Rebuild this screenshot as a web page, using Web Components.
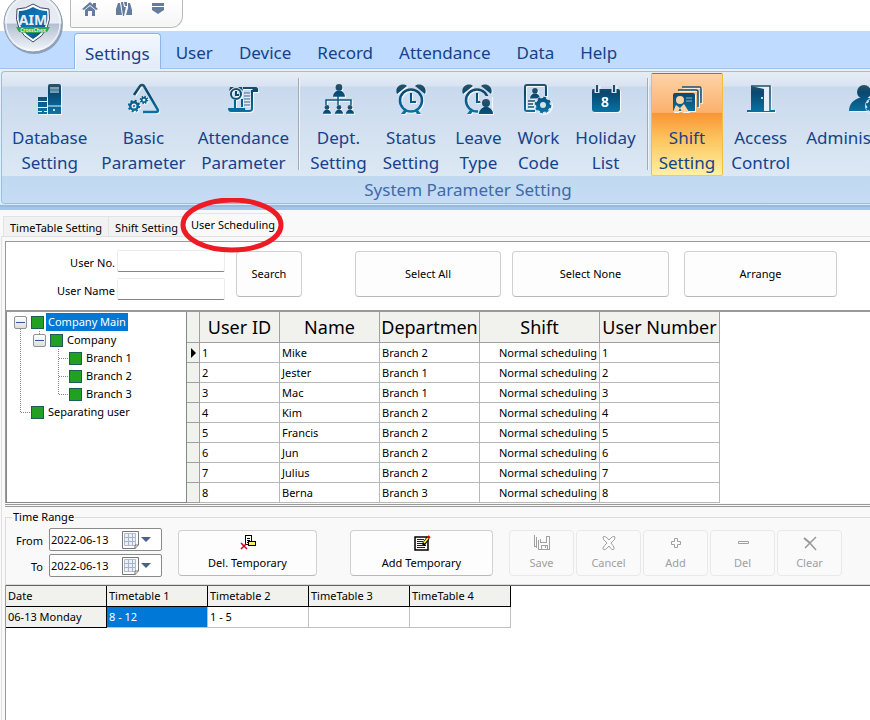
<!DOCTYPE html>
<html lang="en">
<head>
<meta charset="utf-8">
<title>User Scheduling</title>
<style>
html { height: 100%; }
body {
    margin: 0;
    min-height: 100%;
    display: flex;
    flex-direction: column;
    overflow-x: hidden;
    background: #f9f9f9;
    color: #000;
    font: 11px/16px "Noto Sans", "Open Sans", sans-serif;
}
</style>
</head>
<body>
<schedule-app></schedule-app>

<script>
function gear (x, y, r, hole) {
    const step = (2 * Math.PI * r / 16).toFixed(3);
    return `<circle cx="${x}" cy="${y}" r="${r}" fill="none" stroke="url(#g)" stroke-width="2.500" stroke-dasharray="${step}"/>
        <circle cx="${x}" cy="${y}" r="${(r + hole) / 2}" fill="none" stroke="url(#g)" stroke-width="${r - hole}"/>`;
}

function person (x, y, s) {
    return `<g transform="translate(${x} ${y}) scale(${s})"><circle cy="4" r="4"/><path d="M-7 15 C-7 11 -4 9 -2 8 H2 C4 9 7 11 7 15Z"/></g>`;
}

const clock = x => `
    <g fill="none" stroke="url(#g)">
        <circle cx="${x}" cy="17.500" r="11" stroke-width="2.500"/>
        <path d="M${x} 10 V19 H${x + 5}" stroke-width="2"/>
    </g>
    <path d="M${x - 14} 11 C${x - 17} 4 ${x - 9} -1 ${x - 4} 3Z M${x + 14} 11 C${x + 17} 4 ${x + 9} -1 ${x + 4} 3Z M${x - 7} 27 L${x - 10} 31 H${x - 6} L${x - 4} 28Z M${x + 7} 27 L${x + 10} 31 H${x + 6} L${x + 4} 28Z"/>`;

const icons = {
    database: `<path d="M16 1 H25 Q27 1 27 3 V31 H14 V3 Q14 1 16 1Z M4 14 H13 V18 H4Z M4 19 H13 V24 H4Z M4 25 H13 V28 H10 V29 H13 V31 H4 V29 H8 V28 H4Z"/>
        <path d="M16 5 H25 M16 9 H25 M14 23 H27" stroke="#e6f0f8" fill="none"/><path d="M16 7 H25" stroke="#9fb9cc"/><circle cx="20" cy="27" r="1" fill="#fff"/>`,
    basic: `<path d="M6 12 L12 3 Q14 1 16 3 L30 27 Q30 29 28 29 H15" fill="none" stroke="url(#g)" stroke-width="2.500"/>${gear(6, 23, 5, 2.5)}<circle cx="6" cy="23" r="1"/>${gear(16, 17, 3, 1.5)}`,
    attendance: `<g fill="none" stroke="url(#g)" stroke-width="2"><circle cx="9" cy="11" r="5"/><path d="M9 8 V12 H12 M8 17 V26"/><path d="M16 5 H28 Q30 5 30 8 M25 7 V26 Q25 28 22 28 H18 M15 16 V24"/></g>
        <path d="M2 8 L3 4 L7 4Z M11 4 L15 4 L16 8Z M1 25 H18 Q18 28 20 29 H4 Q1 29 1 25Z M25 4 H29 Q32 5 31 9 H26Z"/><path d="M17 10 H23 M17 13 H23 M17 16 H23 M17 19 H23 M17 22 H23" stroke="#456b86"/>`,
    dept: `${person(17, 1, 0.85)}<path d="M16 13 V17 H4 V22 M16 17 H29 V22 M16 17 V22" fill="none" stroke="url(#g)" stroke-width="1.500"/>
        ${person(5, 22, 0.58)}${person(17, 22, 0.58)}${person(28, 22, 0.58)}`,
    status: clock(16),
    leave: `${clock(15)}<path d="M16 31 V25 L19 22 L18 18 L22 13 H30 V31Z" fill="#cfdeee"/>${person(24, 16, 1)}`,
    work: `<path d="M13 28 H5 Q3 28 3 26 V4 Q3 2 5 2 H22 Q24 2 24 4 V13" fill="none" stroke="url(#g)" stroke-width="2"/>${person(13, 5, 0.7)}
        <path d="M6 18 H13 M6 21 H11 M6 24 H12" stroke="#26526e" stroke-width="1.500"/><circle cx="21" cy="22" r="9" fill="#d3e0ef"/>${gear(21, 22, 7, 3)}`,
    holiday: `<path d="M3 6 H28 Q30 6 30 8 V26 Q30 29 27 29 H5 Q2 29 2 26 V8 Q2 6 3 6Z"/>
        <path d="M7 2 V10 M24 2 V10" stroke="#d7e2f0" stroke-width="5"/><path d="M7 2 V9 M24 2 V9" stroke="url(#g)" stroke-width="2"/>
        <path d="M6.500 2 H7.500 V9 H6.500Z M23.500 2 H24.500 V9 H23.500Z"/>
        <text x="15" y="24" text-anchor="middle" fill="#fff" font-size="14" font-weight="700">8</text>`,
    shift: `<path d="M11 4 H29 Q30 4 30 6 V20 M7 7 H25 Q27 7 27 9 V24" fill="none" stroke="url(#g)" stroke-width="1.500"/>
        <path d="M4 10 H22 Q24 10 24 12 V28 H2 V12 Q2 10 4 10Z"/><path d="M15 15 H21 M15 18 H21" stroke="#8fb5cb"/>
        <g fill="#ffd3a2"><circle cx="9" cy="17" r="4"/><path d="M2 29 L5 22 L9 25 L13 21 L18 29 H11 L9 25 L7 29Z"/></g>`,
    access: `<path d="M2 27 H30 V29 H2Z"/><path d="M6 3 H25 V28 H6Z" fill="#e6eef7"/><path d="M6 3 H25 V28" fill="none" stroke="url(#g)" stroke-width="1.500"/><path d="M6 3 L19 6 V29 H6Z"/><circle cx="17" cy="15" r="1" fill="#fff"/>`,
    admin: `<circle cx="19" cy="9" r="7"/><path d="M4 28 C4 20 9 17 14 15 H24 L32 19 V28Z"/><circle cx="28" cy="23" r="8" fill="#d3e0ef"/>${gear(28, 23, 6, 2)}`
};

const glyphs = {
    deltemp: `<g shape-rendering="crispEdges"><path d="M6 1 H11 V9 H6Z" fill="#fff"/><path d="M5.500 .5 H11.500 V9.500 H5.500Z M7 3.500 H10 M7 5.500 H10 M7 7.500 H9" fill="none" stroke="#000"/><path d="M8.500 6.500 H15.500 V10.500 H8.500Z" fill="#ffef5c" stroke="#000"/></g><path d="M1 8 L7 14 M6 9 L1 14" stroke="#d00028" stroke-width="1.500"/>`,
    addtemp: `<path d="M1 2 H14 V15 H1Z" fill="#fff" stroke="#000" stroke-width="1.500"/><path d="M3 4.500 H10 M3 6.500 H9 M3 8.500 H8 M3 10.500 H12 M3 12.500 H11" stroke="#10108c"/><path d="M9 10 L14 3" stroke="#000" stroke-width="3.500"/><path d="M10 8 L14 3" stroke="#ffee30" stroke-width="2"/><path d="M14 1 L16 3" stroke="#e00000" stroke-width="2"/>`,
    save: `<g stroke="#a0a0a0" fill="none" shape-rendering="crispEdges"><path d="M.5 0 V11 L3 13 M2.500 2 V12"/><path d="M4.500 5 V14.500 H15.500 V1.500 H12.500 V7.500 H6.500 V4 M7.500 14 V10.500 H13.500 V14 M11.500 11 V13"/></g>`,
    cancel: `<path d="M2 2 Q4 0 8 5 Q12 0 14 2 Q15 4 10 8 Q14 13 13 14 Q11 16 8 11 Q4 16 2 14 Q1 13 6 8 Q1 4 2 2Z" fill="#fcfcfc" stroke="#a0a0a0"/>`,
    add: `<path d="M6.500 3.500 H9.500 V6.500 H12.500 V9.500 H9.500 V12.500 H6.500 V9.500 H3.500 V6.500 H6.500Z" fill="none" stroke="#a0a0a0"/>`,
    del: `<path d="M3.500 6.500 H13.500 V8.500 H3.500Z" fill="none" stroke="#a0a0a0"/>`,
    clear: `<path d="M2 3 L8 8" stroke="#999" stroke-width="2"/><path d="M7 7 L14 15 M14 2 L3 13" stroke="#999" stroke-width="1.500"/>`
};

class RibbonIcon extends HTMLElement {
    constructor () {
        super();
        this.attachShadow({mode: "open"});
    }

    connectedCallback () {
        this.shadowRoot.innerHTML = `
        <style>
            :host { display: block; width: 32px; height: 32px; white-space: normal; }
            svg { display: block; filter: drop-shadow(1px 1px 0 #f4f9fd); }
        </style>
        <svg width="32" height="32" viewBox="0 0 32 32" fill="url(#g)" aria-hidden="true">
            <defs><linearGradient id="g" gradientUnits="userSpaceOnUse" x1="0" y1="0" x2="0" y2="32">
                <stop offset="0" stop-color="#2f5468"/><stop offset="0.300" stop-color="#08486f"/><stop offset="1" stop-color="#0878ac"/>
            </linearGradient></defs>
            ${icons[this.getAttribute("name")]}
        </svg>`;
    }
}

class RibbonItem extends HTMLElement {
    constructor () {
        super();
        this.attachShadow({mode: "open"});
    }

    connectedCallback () {
        this.shadowRoot.innerHTML = `
        <style>
            :host { display: block; flex: none; }
            button {
                box-sizing: border-box; height: 103px; padding: 9px 7px 0; border: 1px solid transparent; border-radius: 2px;
                background: none; color: #15428b; font: inherit; line-height: 25px; text-align: center;
                display: flex; flex-direction: column; align-items: center; gap: 10px; white-space: pre-line;
            }
            :host([tight]) button { padding: 9px 5px 0; }
            :host([active]) button {
                border-color: #8b7654 #f0bd3c #ffcc33;
                background: linear-gradient(#fdd3a7 0, #fbb16d 38%, #f99535 39%, #fdc55f 65%, #fff1a3 100%);
            }
        </style>
        <button type="button"><ribbon-icon name="${this.getAttribute("icon")}"></ribbon-icon><slot></slot></button>`;
    }
}

class AppHeader extends HTMLElement {
    constructor () {
        super();
        this.attachShadow({mode: "open"});
    }

    connectedCallback () {
        this.shadowRoot.innerHTML = `
        <style>
            :host { display: block; position: relative; background: #fff; font-size: 17px; color: #15428b; }
            .quick {
                box-sizing: border-box; width: 113px; height: 28px; margin-left: 70px; padding: 1px 11px 0; margin-bottom: 3px;
                display: flex; gap: 18px; border: 1px solid #b9b9b9; border-top: 0; border-radius: 0 0 12px 2px;
                background: linear-gradient(#fff, #f5f5f5);
            }
            .quick button { width: 16px; height: 16px; padding: 0; border: 0; background: none; }
            .quick svg { display: block; }
            nav { display: flex; height: 38px; padding: 2px 0 0 74px; box-sizing: border-box; background: #bfdbff; border-bottom: 1px solid #9fc3ee; }
            nav button { border: 1px solid transparent; border-bottom: 0; background: none; padding: 4px 12px 0; color: inherit; font: inherit; line-height: 24px; flex: none; }
            nav button.on { padding: 4px 10px 0; margin-right: 2px; border-color: #8db5e8; border-radius: 4px 4px 0 0; background: linear-gradient(#f2f8ff, #e1ebf7); margin-bottom: -1px; box-shadow: inset 1px 1px #fff; }
            .orb { position: absolute; left: 3px; top: -7px; }
        </style>
        <div class="quick">
            <button type="button" aria-label="Home"><svg width="16" height="16" fill="#647c9f"><path d="M0 8 L8 1 L16 8 L14 9 L8 4 L2 9Z M3 9 L8 5 L13 9 V15 H10 V10 H6 V15 H3Z M11 2 H14 V6 L11 4Z"/></svg></button>
            <button type="button" aria-label="Tools"><svg width="16" height="16" fill="#647c9f"><path d="M2 2 H4 L6 14 H0 V8Z M5 1 H7 L8 6 L10 6 L8 15 H7Z M8 1 H11 V5 H9Z M12 2 H14 L16 9 V14 H10 L12 7Z"/></svg></button>
            <button type="button" aria-label="Customize"><svg width="16" height="16" fill="#647c9f"><path d="M2 2 H14 V5 H2Z M2 6 H14 V9 L8 13 L2 9Z"/></svg></button>
        </div>
        <nav>
            <button type="button" class="on">Settings</button><button type="button">User</button><button type="button">Device</button><button type="button">Record</button><button type="button">Attendance</button><button type="button">Data</button><button type="button">Help</button>
        </nav>
        <svg class="orb" width="62" height="62" viewBox="0 0 62 62" role="img" aria-label="AIM CrossChex">
            <defs>
                <linearGradient id="ball" x2="0" y2="1"><stop offset="0" stop-color="#e3e7ed"/><stop offset="0.500" stop-color="#e8edf4"/><stop offset="0.520" stop-color="#b3bfd1"/><stop offset="1" stop-color="#f4f8fd"/></linearGradient>
                <linearGradient id="shield" x2="1" y2="1"><stop offset="0" stop-color="#0a5ba2"/><stop offset="0.500" stop-color="#0b76bc"/><stop offset="1" stop-color="#07406f"/></linearGradient>
            </defs>
            <circle cx="31" cy="32" r="29" fill="#7888a0" opacity="0.700"/>
            <circle cx="30" cy="30" r="29" fill="url(#ball)" stroke="#8b9ab0"/>
            <circle cx="30" cy="30" r="27" fill="none" stroke="#f7fafd" stroke-width="1"/>
            <path d="M30 11 Q37 16 46 16 Q50 38 30 49 Q10 38 14 16 Q23 16 30 11Z" fill="#fff" stroke="#446"/>
            <path d="M30 14 Q37 18 44 18 Q47 36 30 46 Q13 36 16 18 Q23 18 30 14Z" fill="url(#shield)"/>
            <text x="30" y="32" text-anchor="middle" font-size="14" font-weight="700" fill="#ececee">AIM</text>
            <path d="M13 34 H47 L44 39 Q30 41 16 39Z" fill="#32a548"/>
            <text x="30" y="39" text-anchor="middle" font-size="5" font-weight="700" fill="#e2f3e5">CrossChex</text>
        </svg>`;
    }
}

class RibbonBar extends HTMLElement {
    constructor () {
        super();
        this.attachShadow({mode: "open"});
    }

    connectedCallback () {
        this.shadowRoot.innerHTML = `
        <style>
            :host { display: block; padding: 2px 0 6px 1px; background: linear-gradient(#e5f0fb 0, #d9f0ff 96%, #8eabd1 97%, #a7c4ea 98%); font-size: 17px; overflow: hidden; }
            .group { border: 1px solid #9cbfdb; border-right: 0; border-radius: 4px 0 0 4px; overflow: hidden; background: linear-gradient(#e6edf6 0, #d9e3f1 14px, #c9d9ed 15px, #dce8f4 104px); }
            .items { display: flex; height: 104px; padding: 1px 0 0 2px; box-sizing: border-box; }
            hr { flex: none; width: 1px; height: 92px; margin: 5px 3px 0; border: 0; background: #a4a9b2; box-shadow: 1px 0 #eef4fa; }
            .caption { height: 27px; padding-left: 64px; text-align: center; line-height: 28px; color: #3e6aaa; background: linear-gradient(#c1d8f1, #c5dcf4); }
        </style>
        <div class="group">
            <div class="items">
                <ribbon-item icon="database">Database\nSetting</ribbon-item>
                <ribbon-item icon="basic" tight>Basic\nParameter</ribbon-item>
                <ribbon-item icon="attendance" tight>Attendance\nParameter</ribbon-item>
                <hr>
                <ribbon-item icon="dept">Dept.\nSetting</ribbon-item>
                <ribbon-item icon="status">Status\nSetting</ribbon-item>
                <ribbon-item icon="leave">Leave\nType</ribbon-item>
                <ribbon-item icon="work">Work\nCode</ribbon-item>
                <ribbon-item icon="holiday">Holiday\nList</ribbon-item>
                <hr>
                <ribbon-item icon="shift" active>Shift\nSetting</ribbon-item>
                <ribbon-item icon="access">Access\nControl</ribbon-item>
                <ribbon-item icon="admin">Administrator</ribbon-item>
            </div>
            <div class="caption">System Parameter Setting</div>
        </div>`;
    }
}

class PageTabs extends HTMLElement {
    constructor () {
        super();
        this.attachShadow({mode: "open"});
    }

    connectedCallback () {
        this.shadowRoot.innerHTML = `
        <style>
            :host { display: flex; align-items: flex-end; height: 26px; padding-left: 3px; }
            button { box-sizing: border-box; flex: none; height: 20px; padding: 2px 6px 0; border: 1px solid #e3e3e3; border-bottom: 0; background: #f2f2f2; color: inherit; font: inherit; }
            button + button { border-left: 0; }
            button.on { height: 23px; padding: 0 6px; background: #f9f9f9; position: relative; }
            svg { position: absolute; left: -10px; top: -16px; pointer-events: none; z-index: 2; }
        </style>
        <button type="button">TimeTable Setting</button><button type="button">Shift Setting</button><button type="button" class="on">User Scheduling<svg width="110" height="60" aria-hidden="true"><ellipse cx="57" cy="27" rx="49" ry="25" fill="none" stroke="#ed1c24" stroke-width="5"/></svg></button>`;
    }
}

class ToolButton extends HTMLElement {
    constructor () {
        super();
        this.attachShadow({mode: "open"});
    }

    connectedCallback () {
        const glyph = glyphs[this.getAttribute("icon")];
        this.shadowRoot.innerHTML = `
        <style>
            :host { display: block; flex: none; width: 65px; height: 46px; }
            button {
                width: 100%; height: 100%; padding: 0; border: 1px solid #d0d0d0; border-bottom-color: #b9b9b9; border-radius: 4px;
                background: #fdfdfd; color: #000; font: inherit;
                display: flex; flex-direction: column; align-items: center; justify-content: center; gap: 4px;
            }
            button:disabled { border-color: #e9e9e9; background: #fafafa; color: #a0a0a0; }
            svg { display: block; overflow: visible; }
        </style>
        <button type="button"${this.hasAttribute("disabled") ? " disabled" : ""}>${glyph ? `<svg width="16" height="16" aria-hidden="true">${glyph}</svg>` : ""}<slot></slot></button>`;
    }
}

class SearchPanel extends HTMLElement {
    constructor () {
        super();
        this.attachShadow({mode: "open"});
    }

    connectedCallback () {
        this.shadowRoot.innerHTML = `
        <style>
            :host { display: flex; height: 68px; box-sizing: border-box; padding: 8px 0 0; background: #fff; }
            .fields { display: grid; grid-template-columns: 109px 108px; column-gap: 2px; row-gap: 6px; margin-right: 11px; align-self: start; }
            label { text-align: right; line-height: 22px; padding-top: 2px; height: 20px; }
            input { box-sizing: border-box; width: 108px; height: 22px; border: 1px solid #ececec; border-bottom-color: #858585; border-radius: 2px; font: inherit; }
            tool-button { width: 66px; margin-top: 1px; }
            .all { width: 146px; margin: 1px 11px 0 53px; }
            .none { width: 157px; margin-right: 15px; }
            .arrange { width: 153px; }
        </style>
        <div class="fields">
            <label for="no">User No.</label><input id="no" type="text">
            <label for="name">User Name</label><input id="name" type="text">
        </div>
        <tool-button>Search</tool-button>
        <tool-button class="all">Select All</tool-button>
        <tool-button class="none">Select None</tool-button>
        <tool-button class="arrange">Arrange</tool-button>`;
    }
}

class DeptTree extends HTMLElement {
    constructor () {
        super();
        this.attachShadow({mode: "open"});
    }

    connectedCallback () {
        this.shadowRoot.innerHTML = `
        <style>
            :host { display: block; box-sizing: border-box; width: 181px; flex: none; padding: 1px 0 0 7px; background: #fff; border: 1px solid #828790; border-top: 0; }
            ul { margin: 0; padding: 0; list-style: none; }
            ul ul { margin-left: 19px; }
            .row { display: flex; align-items: center; height: 18px; }
            li { background: repeating-linear-gradient(#888 0 1px, transparent 1px 2px) 6px 0 / 1px 100% no-repeat; }
            li:last-child { background-size: 1px 10px; }
            li.first { background-position: 6px 12px; }
            .dots { width: 10px; height: 1px; margin-left: 7px; background: repeating-linear-gradient(90deg, #888 0 1px, transparent 1px 2px); }
            button { box-sizing: border-box; width: 13px; height: 13px; padding: 0; border: 1px solid #919191; border-radius: 2px; background: linear-gradient(#fff, #ddd); margin-right: 4px; }
            button i { display: block; height: 1px; margin: 0 1px; background: #35559b; }
            .box { box-sizing: border-box; width: 13px; height: 13px; background: #22a022; border: 1px solid #1d5c5c; margin-right: 2px; }
            .text { padding: 0 2px; line-height: 18px; }
            .sel { background: #0078d7; color: #fff; }
        </style>
        <ul>
            <li class="first"><div class="row"><button type="button" aria-label="Collapse"><i></i></button><span class="box"></span><span class="text sel">Company Main</span></div>
                <ul><li><div class="row"><button type="button" aria-label="Collapse"><i></i></button><span class="box"></span><span class="text">Company</span></div>
                    <ul>
                        <li><div class="row"><span class="dots"></span><span class="box"></span><span class="text">Branch 1</span></div></li>
                        <li><div class="row"><span class="dots"></span><span class="box"></span><span class="text">Branch 2</span></div></li>
                        <li><div class="row"><span class="dots"></span><span class="box"></span><span class="text">Branch 3</span></div></li>
                    </ul>
                </li></ul>
            </li>
            <li><div class="row"><span class="dots"></span><span class="box"></span><span class="text">Separating user</span></div></li>
        </ul>`;
    }
}

class UserGrid extends HTMLElement {
    constructor () {
        super();
        this.attachShadow({mode: "open"});
    }

    connectedCallback () {
        const users = [["Mike", 2], ["Jester", 1], ["Mac", 1], ["Kim", 2], ["Francis", 2], ["Jun", 2], ["Julius", 2], ["Berna", 3]];
        const rows = users.map(([name, branch], i) => `
            <tr><th scope="row">${i == 0 ? '<svg width="6" height="10" aria-label="Current row"><path d="M1 0 L6 5 L1 10Z"/></svg>' : ""}</th>
            <td>${i + 1}</td><td>${name}</td><td>Branch ${branch}</td><td class="r">Normal scheduling</td><td>${i + 1}</td></tr>`).join("");

        this.shadowRoot.innerHTML = `
        <style>
            :host { display: block; flex: 1; background: #fff; }
            table { width: 533px; table-layout: fixed; border-collapse: separate; border-spacing: 0; }
            th, td { box-sizing: border-box; height: 20px; padding: 0 2px; text-align: left; font-weight: 400; line-height: 19px; white-space: nowrap; overflow: hidden; border-right: 1px solid #b8b8b8; border-bottom: 1px solid #b8b8b8; }
            .r { text-align: right; }
            th { background: #f1f2ed; border-color: #a0a0a0; }
            thead th { height: 31px; padding: 0; font-size: 18px; line-height: 30px; text-align: center; }
            tbody th { padding: 0 0 0 3px; }
            svg { display: block; }
        </style>
        <table>
            <colgroup><col style="width:13px"><col style="width:80px"><col style="width:100px"><col style="width:100px"><col style="width:120px"><col style="width:120px"></colgroup>
            <thead><tr><th></th><th>User ID</th><th>Name</th><th>Departmen</th><th>Shift</th><th>User Number</th></tr></thead>
            <tbody>${rows}</tbody>
        </table>`;
    }
}

class DateField extends HTMLElement {
    constructor () {
        super();
        this.attachShadow({mode: "open"});
    }

    connectedCallback () {
        const label = this.getAttribute("label");
        this.shadowRoot.innerHTML = `
        <style>
            :host { display: flex; gap: 6px; align-items: center; height: 23px; }
            label { width: 32px; text-align: right; padding-top: 2px; }
            .box { display: flex; box-sizing: border-box; width: 113px; height: 23px; border: 1px solid #8a8a8a; border-radius: 2px; background: #fff; }
            input { flex: 1; min-width: 0; padding: 0 0 0 1px; border: 0; background: none; font: inherit; }
            button { width: 40px; padding: 0; border: 0; background: none; }
            svg { display: block; }
        </style>
        <label for="date">${label}</label>
        <span class="box">
            <input id="date" type="text" value="2022-06-13">
            <button type="button" aria-label="Open calendar"><svg width="40" height="20"><path d="M1.500 1.500 H17.500 V15 L14 18.500 H1.500Z" fill="#fff" stroke="#777"/><path d="M3.500 3.500 H14.500 V15.500 H3.500Z" fill="#eaf0fa" stroke="#b4bccb"/><path d="M7.500 4 V16 M11.500 4 V16 M3 7.500 H14 M3 11.500 H14" stroke="#a9b3c8"/><path d="M17 15 H14 V19" fill="none" stroke="#777"/><path d="M20 7 H30 L25 12Z" fill="#49608f"/></svg></button>
        </span>`;
    }
}

class TimeRange extends HTMLElement {
    constructor () {
        super();
        this.attachShadow({mode: "open"});
    }

    connectedCallback () {
        this.shadowRoot.innerHTML = `
        <style>
            :host { display: block; padding-top: 2px; }
            fieldset { display: block; box-sizing: border-box; min-width: 0; margin: 0; height: 76px; padding: 3px 0 0 5px; border: 1px solid #dcdcdc; border-right: 0; }
            legend { padding: 0 1px; margin-left: 1px; height: 16px; }
            .body { display: flex; }
            .dates { display: flex; flex-direction: column; gap: 3px; margin: 0 16px 0 0; }
            tool-button { margin: 2px 2px 0 0; }
            .del { width: 139px; margin-right: 33px; }
            .add { width: 143px; margin-right: 16px; }
        </style>
        <fieldset>
            <legend>Time Range</legend>
            <div class="body">
                <div class="dates"><date-field label="From"></date-field><date-field label="To"></date-field></div>
                <tool-button class="del" icon="deltemp">Del. Temporary</tool-button>
                <tool-button class="add" icon="addtemp">Add Temporary</tool-button>
                <tool-button disabled icon="save">Save</tool-button>
                <tool-button disabled icon="cancel">Cancel</tool-button>
                <tool-button disabled icon="add">Add</tool-button>
                <tool-button disabled icon="del">Del</tool-button>
                <tool-button disabled icon="clear">Clear</tool-button>
            </div>
        </fieldset>`;
    }
}

class ShiftTable extends HTMLElement {
    constructor () {
        super();
        this.attachShadow({mode: "open"});
    }

    connectedCallback () {
        this.shadowRoot.innerHTML = `
        <style>
            :host { display: block; flex: 1; background: #fff; border-top: 1px solid #646464; }
            table { width: 505px; table-layout: fixed; border-collapse: separate; border-spacing: 0; }
            th, td { box-sizing: border-box; height: 21px; padding: 0 2px; line-height: 20px; text-align: left; font-weight: 400; white-space: nowrap; overflow: hidden; border-right: 1px solid #c0c0c0; border-bottom: 1px solid #c0c0c0; }
            th { background: #f1f2ed; border-color: #000; }
            td.sel { background: #0078d7; color: #fff; }
        </style>
        <table>
            <thead><tr><th>Date</th><th>Timetable 1</th><th>Timetable 2</th><th>TimeTable 3</th><th>TimeTable 4</th></tr></thead>
            <tbody><tr><th scope="row">06-13 Monday</th><td class="sel">8 - 12</td><td>1 - 5</td><td></td><td></td></tr></tbody>
        </table>`;
    }
}

class ScheduleApp extends HTMLElement {
    constructor () {
        super();
        this.attachShadow({mode: "open"});
    }

    connectedCallback () {
        this.shadowRoot.innerHTML = `
        <style>
            :host { flex: 1; display: flex; flex-direction: column; }
            .page { flex: 1; display: flex; flex-direction: column; margin-left: 1px; padding: 4px 0 0 3px; border: solid #e0e0e0; border-width: 1px 0 0 1px; }
            .top { border-top: 1px solid #999; border-left: 1px solid #999; }
            .split { display: flex; border-top: 2px solid #999; height: 191px; overflow: hidden; }
            .bar { height: 1px; border: solid #999; border-width: 1px 0; margin: 1px 0 0; }
            .bottom { display: flex; flex-direction: column; flex: 1; border-left: 1px solid #999; }
        </style>
        <app-header></app-header>
        <ribbon-bar></ribbon-bar>
        <page-tabs></page-tabs>
        <div class="page">
            <div class="top">
                <search-panel></search-panel>
                <div class="split"><dept-tree></dept-tree><user-grid></user-grid></div>
            </div>
            <div class="bar"></div>
            <time-range></time-range>
            <div class="bottom"><shift-table></shift-table></div>
        </div>`;
    }
}

customElements.define("ribbon-icon", RibbonIcon);
customElements.define("ribbon-item", RibbonItem);
customElements.define("app-header", AppHeader);
customElements.define("ribbon-bar", RibbonBar);
customElements.define("page-tabs", PageTabs);
customElements.define("tool-button", ToolButton);
customElements.define("search-panel", SearchPanel);
customElements.define("dept-tree", DeptTree);
customElements.define("user-grid", UserGrid);
customElements.define("date-field", DateField);
customElements.define("time-range", TimeRange);
customElements.define("shift-table", ShiftTable);
customElements.define("schedule-app", ScheduleApp);
</script>
</body>
</html>
